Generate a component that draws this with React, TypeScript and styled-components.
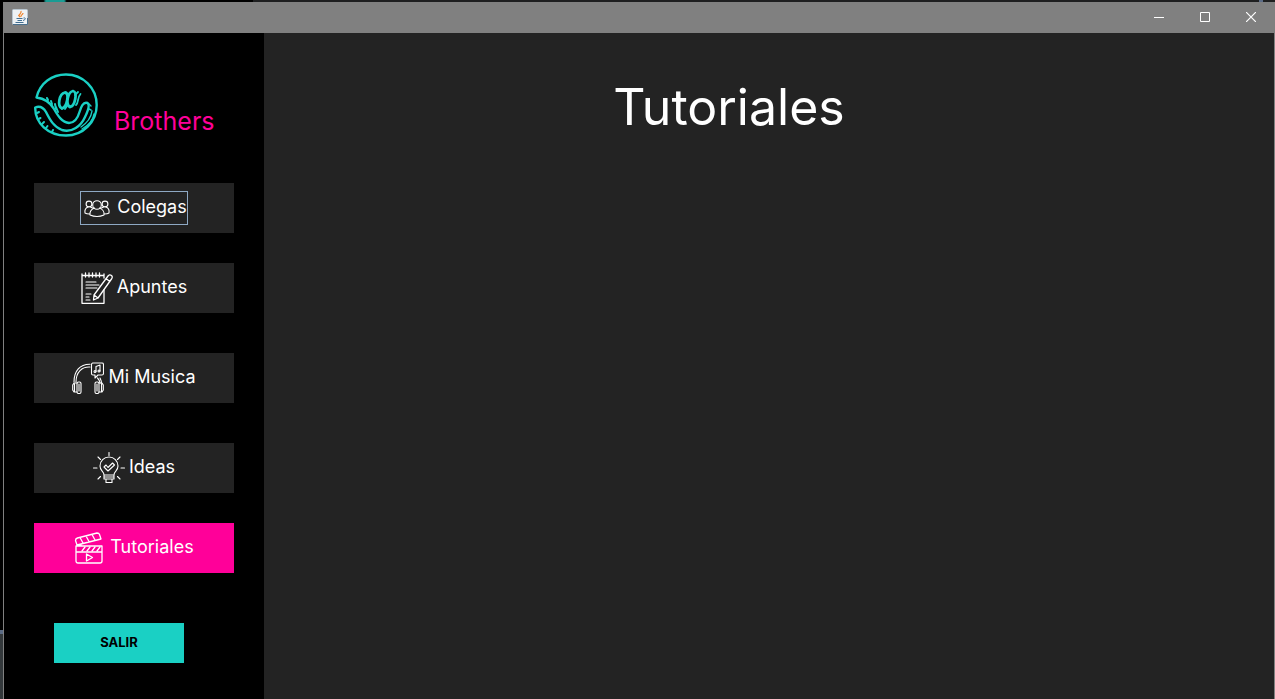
import React from "react";
import styled, { createGlobalStyle } from "styled-components";

const pink = "#ff0099";
const teal = "#1ad0c4";
const panel = "#232323";

const GlobalStyle = createGlobalStyle`
  * { box-sizing: border-box; }
  body { margin: 0; background: #000; font-family: Inter, "Liberation Sans", sans-serif; }
`;

const Desktop = styled.div`
  min-height: 100vh;
  display: flex;
  padding: 2px 0 0 3px;
  background:
    radial-gradient(ellipse 12px 2px at 55px 1px, #1a9c94 80%, transparent 100%) no-repeat,
    linear-gradient(#5b6b85, #5b6b85) 0 630px / 3px 4px no-repeat,
    linear-gradient(#33383b, #33383b) 0 634px / 3px 100% no-repeat,
    linear-gradient(#5b6b85, #5b6b85) right 12px top 0 / 4px 2px no-repeat,
    linear-gradient(90deg, #000 253px, #1e1f20 253px) 0 0 / 100% 2px no-repeat,
    #000;
`;

const Window = styled.div`
  flex: 1;
  display: flex;
  flex-direction: column;
  border: 1px solid #808080;
  border-bottom: 0;
`;

const TitleBar = styled.header`
  height: 30px;
  display: flex;
  align-items: center;
  justify-content: space-between;
  padding: 0 0 2px 8px;
  background: #808080;
`;

const WindowControls = styled.div`
  display: flex;
`;

const ControlButton = styled.button`
  width: 46px;
  height: 28px;
  padding: 0;
  border: 0;
  display: grid;
  place-items: center;
  background: transparent;
  color: #fff;
`;

const Body = styled.div`
  flex: 1;
  display: flex;
`;

const Sidebar = styled.aside`
  width: 260px;
  flex-shrink: 0;
  padding: 40px 30px 36px;
  background: #000;
`;

const Brand = styled.div`
  display: flex;
  align-items: flex-end;
  gap: 16px;
  height: 64px;
  margin-bottom: 46px;
`;

const BrandName = styled.span`
  color: ${pink};
  font-size: 25px;
  line-height: 32px;
`;

const Menu = styled.nav`
  display: flex;
  flex-direction: column;
`;

const MenuGroup = styled.div`
  display: flex;
  flex-direction: column;
  gap: 30px;
  & + & { margin-top: 40px; }
`;

const MenuButton = styled.button<{ $active?: boolean }>`
  width: 100%;
  height: 50px;
  padding: 0;
  border: 0;
  display: flex;
  align-items: center;
  justify-content: center;
  background: ${(p) => (p.$active ? pink : panel)};
  color: #fff;
  font: 400 18px/30px Inter, "Liberation Sans", sans-serif;
`;

const MenuContent = styled.span<{ $focused?: boolean }>`
  display: flex;
  gap: 4px;
  height: 34px;
  border: 1px solid ${(p) => (p.$focused ? "#8fa9c4" : "transparent")};
`;

const ExitButton = styled.button`
  width: 130px;
  height: 40px;
  margin: 50px 20px 0;
  padding: 0 0 2px;
  border: 0;
  background: ${teal};
  color: #000;
  font: 700 13px/18px Inter, "Liberation Sans", sans-serif;
`;

const Main = styled.main`
  flex: 1;
  padding: 38px 80px 0 0;
  background: ${panel};
`;

const Title = styled.h1`
  margin: 0;
  color: #fff;
  text-align: center;
  font-size: 50px;
  line-height: 72px;
  font-weight: 400;
`;

const JavaIcon = () => (
  <svg width="16" height="16" viewBox="0 0 16 16" fill="none" aria-hidden="true">
    <rect x=".5" y=".5" width="15" height="15" rx="1" fill="#eef2f5" stroke="#b9c6d1" />
    <path d="M1 15.5h14.500V9" stroke="#49708e" />
    <path d="M8 8C5 6 10 5 9 2M9 8c-1-2 2-2 2-4M6.500 7L7 6" stroke="#f08024" strokeWidth="1.200" />
    <path d="M4.500 9.500h6M5.500 11.500h4.500M3.500 13.500h8M11.500 9c3-.5 2 2-.5 2.500" stroke="#426f92" />
  </svg>
);

const Logo = () => (
  <svg width="64" height="64" viewBox="0 0 64 64" fill="none" stroke={teal} strokeLinecap="round" strokeLinejoin="round" aria-hidden="true">
    <path strokeWidth="2.400" d="M2.500 24.500C6 10 18 1.500 32 1.500C49 1.500 62.700 15 62.700 32S49 62.500 32 62.500C14 62.500 1 50 1.200 34.500C5 33 9 34 12 39C16 47 20 54 28 57C38 60 47 53 51 44C54 38 56 32 53.500 30C49 28.500 47 34 45.500 39C43.500 46 40 50 35 50C28 49.500 24 43 20 36C16 29 11 25.500 2.500 24.500Z" />
    <path strokeWidth="2" d="M3 40l2-1M4.500 46l2-1M8 51l2-2M12 55l1.500-2M18 59l1-2M14 27l-1-2M18 31l-1-3M22 36l-1-5M24 39l-2-5" />
    <path strokeWidth="2.800" d="M28 35.500C23 33 25 21 31 19.500C36 20 33 34 28 35.500M36 34C31 31 34 19 39 18C44 19 41 33 36 34" />
    <path strokeWidth="1.800" d="M42 32C45 29 43 25 46.500 21M41 22l3-3M31 36l2-3" />
    <path strokeWidth="1.400" d="M47 54C53 50 57 45 58 38M48 56C55 52 59 47 60 41M55 31l2 2M55 36l2 1" />
  </svg>
);

const MenuIcon = ({ children }: { children: React.ReactNode }) => (
  <svg width="32" height="32" viewBox="0 0 32 32" fill="none" stroke="currentColor" strokeWidth="1.100" strokeLinecap="round" strokeLinejoin="round" aria-hidden="true">
    {children}
  </svg>
);

const PeopleIcon = () => (
  <MenuIcon>
    <circle cx="16" cy="13" r="4.300" />
    <path d="M9 23c-.5-4 2-6 4.500-7M18.500 16c3 1 5 4 4.500 7q-7 3-14 0" />
    <circle cx="8" cy="12" r="2.900" />
    <circle cx="24" cy="12" r="2.900" />
    <path d="M8.500 22q-3 0-4.500-1c-.5-3 .5-5 3-6M9.500 15l2 1M23.500 22q3 0 4.500-1c.5-3-.5-5-3-6M22.500 15l-2 1" />
  </MenuIcon>
);

const NotesIcon = () => (
  <MenuIcon>
    <path strokeWidth="1.300" d="M23 18v13.300H1V2M23 2v4M1 3.500h22M4.500 1v4M8 1v4M11.500 1v4M15 1v4M18.500 1v4" />
    <path d="M5 10h10M5 13h13M5 16h11M5 22h5M5 25h3M5 28h4" />
    <path strokeWidth="1.300" d="M13 23L27 4q1.500-2 3.500-.5 1.500 1.500 0 3.500L17 26l-4.500 2zM13 23l4 3M25 6.500l3.800 3" />
  </MenuIcon>
);

const MusicIcon = () => (
  <MenuIcon>
    <path d="M2 20C2 9 8 2 18 2.200M4 20C4 10 10 4.500 18 5M28 16q1.500 3 1.500 5M25.500 16q2 2 2.500 5" />
    <rect x="5" y="20" width="4" height="11.500" rx="1.500" />
    <rect x="23" y="20" width="4" height="11.500" rx="1.500" />
    <path d="M5 21H2L.7 23v5L2 30h3M27 21h3l1.300 2v5L30 30h-3M2.500 22v7M29.500 22v7M7 22v7M25 22v7" />
    <path d="M20.500 1h9.500q1.500 0 1.500 1.500v9q0 1.500-1.500 1.500h-4l-3 3v-3h-2q-1.500 0-1.500-1.500v-9Q19.500 1 21 1" />
    <path d="M24 9.500V4.500l4-1.500v6" />
    <circle cx="23" cy="9.500" r="1" />
    <circle cx="27" cy="9" r="1" />
  </MenuIcon>
);

const BulbIcon = () => (
  <MenuIcon>
    <path d="M11 23c0-4-4-4-4-9a9 9 0 0 1 18 0c0 5-4 5-4 9zM11 23v4h10v-4M11.500 25h9M13 27v3.500h6V27M16 .5v3M.5 16H4M28 16h3.500M5 5l2.500 2.500M27 5l-2.500 2.500M5 27l2.500-2.500M27 27l-2.500-2.500" />
    <path d="M11 15l2-2 2 2.500 4.500-4.500 2 2L15 19z" />
  </MenuIcon>
);

const ClapperIcon = () => (
  <MenuIcon>
    <path strokeWidth="1.300" d="M2 14h26v15q0 2-2 2H4q-2 0-2-2zM2 20h26M3 13L1.500 8.500q0-2 2-2.500L23 1q2 0 2.500 1.500L27 7zM3 13h4M6 5.500L9 11M12 4l3 5.500M18 2.500L21 8" />
    <path strokeWidth="1.300" d="M8 19l3-4M13 19l3-4M18 19l3-4M23 19l3-4M12.500 22l6 3.500-6 3.500z" />
  </MenuIcon>
);

interface EntryProps {
  icon: React.ReactNode;
  label: string;
  active?: boolean;
  focused?: boolean;
}

const Entry = ({ icon, label, active, focused }: EntryProps) => (
  <MenuButton type="button" $active={active} aria-current={active ? "page" : undefined}>
    <MenuContent $focused={focused}>
      {icon}
      {label}
    </MenuContent>
  </MenuButton>
);

export default function App() {
  return (
    <>
      <GlobalStyle />
      <Desktop>
        <Window>
          <TitleBar>
            <JavaIcon />
            <WindowControls>
              <ControlButton type="button" aria-label="Minimizar">
                <svg width="10" height="10" stroke="currentColor"><path d="M0 5.500h10" /></svg>
              </ControlButton>
              <ControlButton type="button" aria-label="Maximizar">
                <svg width="10" height="10" fill="none" stroke="currentColor"><path d="M.5.5h9v9h-9z" /></svg>
              </ControlButton>
              <ControlButton type="button" aria-label="Cerrar">
                <svg width="10" height="10" stroke="currentColor" strokeWidth="1.200"><path d="M0 0l10 10M10 0L0 10" /></svg>
              </ControlButton>
            </WindowControls>
          </TitleBar>
          <Body>
            <Sidebar>
              <Brand>
                <Logo />
                <BrandName>Brothers</BrandName>
              </Brand>
              <Menu>
                <MenuGroup>
                  <Entry icon={<PeopleIcon />} label="Colegas" focused />
                  <Entry icon={<NotesIcon />} label="Apuntes" />
                </MenuGroup>
                <MenuGroup>
                  <Entry icon={<MusicIcon />} label="Mi Musica" />
                </MenuGroup>
                <MenuGroup>
                  <Entry icon={<BulbIcon />} label="Ideas" />
                  <Entry icon={<ClapperIcon />} label="Tutoriales" active />
                </MenuGroup>
              </Menu>
              <ExitButton type="button">SALIR</ExitButton>
            </Sidebar>
            <Main>
              <Title>Tutoriales</Title>
            </Main>
          </Body>
        </Window>
      </Desktop>
    </>
  );
}
